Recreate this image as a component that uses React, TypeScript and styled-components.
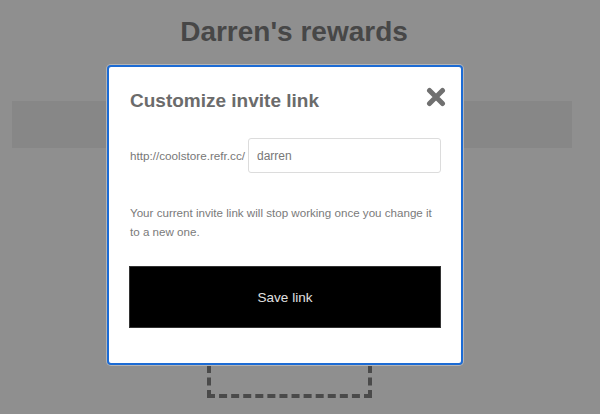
import styled, { createGlobalStyle } from "styled-components";

const GlobalStyle = createGlobalStyle`
  html, body {
    margin: 0;
    padding: 0;
    background: #8f8f8f;
  }
  body {
    font-family: "Liberation Sans", Arial, Helvetica, sans-serif;
  }
`

const Page = styled.div`
  position: relative;
  width: 600px;
  height: 414px;
  overflow: hidden;
  background: #8f8f8f;
  padding: 14px 28px 0 12px;
  box-sizing: border-box;
  display: flex;
  flex-direction: column;
  align-items: center;
`

const Heading = styled.h1`
  margin: 0;
  font-size: 28px;
  line-height: 36px;
  font-weight: 700;
  color: #474747;
  padding-left: 4px;
`

const Band = styled.div`
  align-self: stretch;
  height: 47px;
  margin-top: 51px;
  background: #878787;
`

const DashedBox = styled.div`
  width: 165px;
  height: 120px;
  margin-top: 130px;
  border: 4px dashed #4a4a4a;
  box-sizing: border-box;
  margin-left: -6px;
`

const Modal = styled.div`
  position: absolute;
  top: 65px;
  left: 107px;
  width: 356px;
  box-sizing: border-box;
  background: #fff;
  border: 2px solid #1c6bd4;
  border-radius: 4px;
  box-shadow: 0 0 0 1px #b4b4b4;
  padding: 22px 20px 35px 20px;
  display: flex;
  flex-direction: column;
`

const Title = styled.h2`
  margin: 0 0 0 1px;
  font-size: 19px;
  line-height: 24px;
  font-weight: 700;
  color: #6b6b6b;
`

const CloseButton = styled.button`
  position: absolute;
  top: 19px;
  right: 15px;
  width: 21px;
  height: 21px;
  padding: 0;
  margin: 0;
  border: none;
  background: none;
  cursor: pointer;
  display: flex;
  align-items: center;
  justify-content: center;
`

const LinkRow = styled.div`
  display: flex;
  align-items: center;
  margin-top: 25px;
`

const Prefix = styled.span`
  font-size: 11.7px;
  color: #777;
  width: 118px;
  padding-left: 1px;
  white-space: nowrap;
`

const Input = styled.input`
  flex: 1;
  height: 35px;
  box-sizing: border-box;
  border: 1px solid #dcdcdc;
  border-radius: 3px;
  padding: 0 8px;
  font-family: "Liberation Sans", Arial, sans-serif;
  font-size: 12px;
  color: #777;
  outline: none;
`

const Note = styled.p`
  margin: 30px 0 0 1px;
  font-size: 11.6px;
  line-height: 19px;
  color: #7a7a7a;
`

const SaveButton = styled.button`
  margin-top: 25px;
  height: 62px;
  border: 1px solid #333;
  background: #000;
  color: #e0e0e0;
  font-family: "Liberation Sans", Arial, sans-serif;
  font-size: 13.5px;
  cursor: pointer;
`

const CloseIcon = () => (
  <svg width="20" height="20" viewBox="0 0 20 20">
    <path d="M3.5 3.5 L16.5 16.5 M16.5 3.5 L3.5 16.5" stroke="#707070" strokeWidth="5" strokeLinecap="round" />
  </svg>
)

export default function App() {
  return (
    <>
      <GlobalStyle />
      <Page>
        <Heading>Darren's rewards</Heading>
        <Band />
        <DashedBox />
        <Modal>
          <Title>Customize invite link</Title>
          <CloseButton aria-label="close"><CloseIcon /></CloseButton>
          <LinkRow>
            <Prefix>http://coolstore.refr.cc/</Prefix>
            <Input defaultValue="darren" />
          </LinkRow>
          <Note>Your current invite link will stop working once you change it to a new one.</Note>
          <SaveButton>Save link</SaveButton>
        </Modal>
      </Page>
    </>
  );
}
